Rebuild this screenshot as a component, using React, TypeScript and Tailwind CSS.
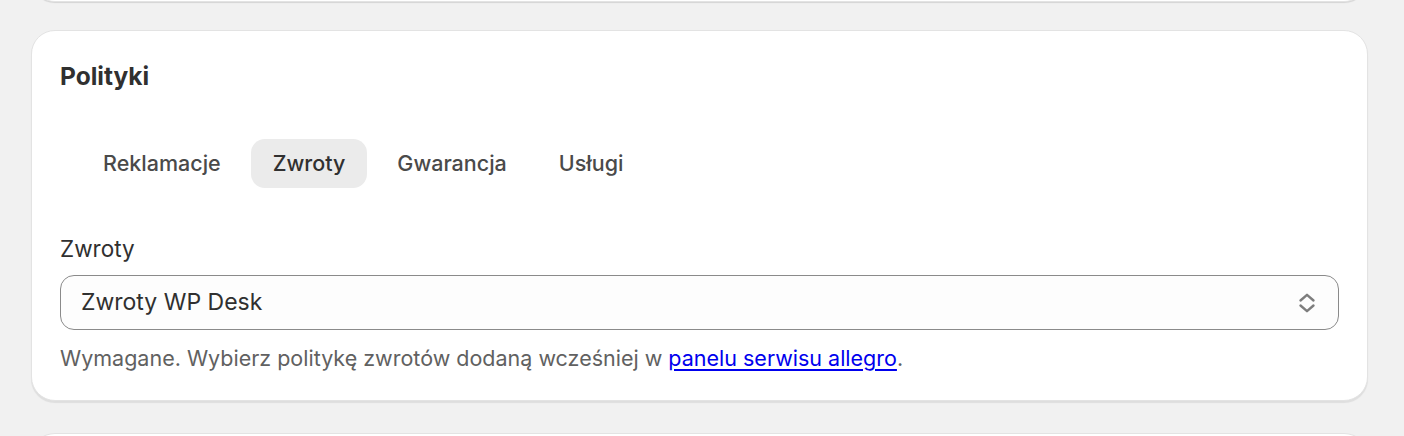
const tabs = ['Reklamacje', 'Zwroty', 'Gwarancja', 'Usługi'];

function SelectIcon() {
  return (
    <svg width="18" height="24" viewBox="0 0 18 24" fill="none" className="text-[#7d7d7d]">
      <path d="M2.5 9.5 9 3.8l6.5 5.7" stroke="currentColor" strokeWidth="2.4" strokeLinecap="round" strokeLinejoin="round" />
      <path d="M2.5 14.5 9 20.2l6.5-5.7" stroke="currentColor" strokeWidth="2.4" strokeLinecap="round" strokeLinejoin="round" />
    </svg>
  );
}

export default function App() {
  const active = 'Zwroty';

  return (
    <div className="w-[1404px] h-[436px] overflow-hidden bg-[#f1f1f1] font-['Inter',sans-serif] text-[#303030]">
      {/* previous card (bottom edge) */}
      <div className="-mt-[40px] ml-[31px] mr-[36px] h-[42px] rounded-b-[24px] bg-white shadow-[0_1px_1px_rgba(0,0,0,0.12)] border-b border-[#e3e3e3]" />

      {/* Polityki card */}
      <div className="mt-[28px] ml-[31px] mr-[36px] rounded-[24px] bg-white border border-[#e3e3e3] shadow-[0_2px_1px_rgba(0,0,0,0.08)] px-[28px] pt-[30px] pb-[28px]">
        <h2 className="text-[24.5px] font-[650] leading-[30px]">Polityki</h2>

        <div className="mt-[48px] ml-[21px] flex gap-[8px]">
          {tabs.map((t) => (
            <button
              key={t}
              className={
                'h-[49px] px-[22px] rounded-[14px] text-[21.5px] font-medium ' +
                (t === active ? 'bg-[#ebebeb] text-[#303030]' : 'text-[#4a4a4a]')
              }
            >
              {t}
            </button>
          ))}
        </div>

        <div className="mt-[47px]">
          <label className="block text-[22.5px] leading-[28px] text-[#303030]">Zwroty</label>
          <div className="mt-[12px] h-[55px] flex items-center justify-between rounded-[14px] border border-[#8a8a8a] bg-[#fdfdfd] pl-[20px] pr-[22px]">
            <span className="text-[23px]">Zwroty WP Desk</span>
            <SelectIcon />
          </div>
          <p className="mt-[14px] text-[21.5px] leading-[28px] text-[#616161]">
            Wymagane. Wybierz politykę zwrotów dodaną wcześniej w{' '}
            <a href="#" className="text-[#0000ee] underline underline-offset-[3px]">panelu serwisu allegro</a>.
          </p>
        </div>
      </div>

      {/* next card (top edge) */}
      <div className="mt-[32px] ml-[31px] mr-[36px] h-[40px] rounded-t-[24px] bg-white border-t border-[#e3e3e3]" />
    </div>
  );
}
